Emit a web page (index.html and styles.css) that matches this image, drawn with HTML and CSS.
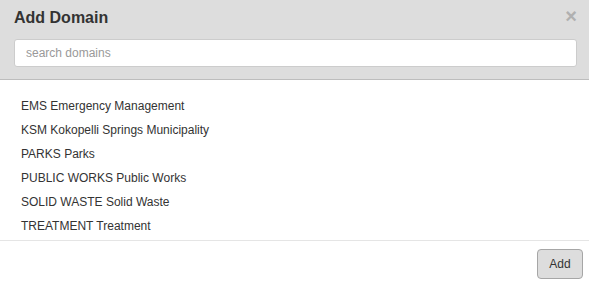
FILE: index.html
```html
<!DOCTYPE html>
<html lang="en">
<head>
    <meta charset="UTF-8">
    <meta name="viewport" content="width=device-width, initial-scale=1.0">
    <title>Add Domain</title>
    <link rel="stylesheet" href="styles.css">
</head>
<body>
    <div class="modal">
        <!-- Header with search -->
        <div class="modal-header">
            <div class="title-row">
                <h3>Add Domain</h3>
                <span class="close">&times;</span>
            </div>
            <input class="search" type="text" placeholder="search domains">
        </div>

        <!-- Domain list -->
        <ul class="domain-list">
            <li>EMS Emergency Management</li>
            <li>KSM Kokopelli Springs Municipality</li>
            <li>PARKS Parks</li>
            <li>PUBLIC WORKS Public Works</li>
            <li>SOLID WASTE Solid Waste</li>
            <li>TREATMENT Treatment</li>
        </ul>

        <div class="modal-footer">
            <button class="button">Add</button>
        </div>
    </div>
</body>
</html>
```

FILE: styles.css
```css
/* General styles */
body {
    font-family: Arial, "Liberation Sans", sans-serif;
    background-color: #fff;
    color: #333;
    margin: 0;
    padding: 0;
}

/* Header */
.modal-header {
    background-color: #dddddd;
    padding: 8px 12px 12px 14px;
    border-bottom: 1px solid #bdbdbd;
}
.title-row {
    display: flex;
    justify-content: space-between;
    align-items: flex-start;
    margin-bottom: 11px;
}
.title-row h3 {
    margin: 0;
    font-size: 16px;
    line-height: 20px;
    font-weight: bold;
    color: #333;
}
.close {
    font-size: 20px;
    font-weight: bold;
    line-height: 20px;
    color: #b0b0b0;
    margin-top: -2px;
}
.search {
    display: block;
    box-sizing: border-box;
    width: 100%;
    height: 28px;
    margin: 0;
    padding: 0 11px;
    font-family: inherit;
    font-size: 12px;
    color: #333;
    background: #fff;
    border: 1px solid #cccccc;
    border-radius: 3px;
    outline: none;
}
.search::placeholder {
    color: #999;
}

/* Domain list */
.domain-list {
    list-style: none;
    margin: 0;
    padding: 14px 0 2px 21px;
}
.domain-list li {
    font-size: 12px;
    line-height: 24px;
}

/* Footer */
.modal-footer {
    border-top: 1px solid #e5e5e5;
    padding: 8px 6px 0 0;
    display: flex;
    justify-content: flex-end;
}
.button {
    width: 46px;
    height: 30px;
    font-family: inherit;
    font-size: 12px;
    color: #333;
    background-color: #dddddd;
    border: 1px solid #a6a6a6;
    border-radius: 4px;
    cursor: pointer;
}
```
